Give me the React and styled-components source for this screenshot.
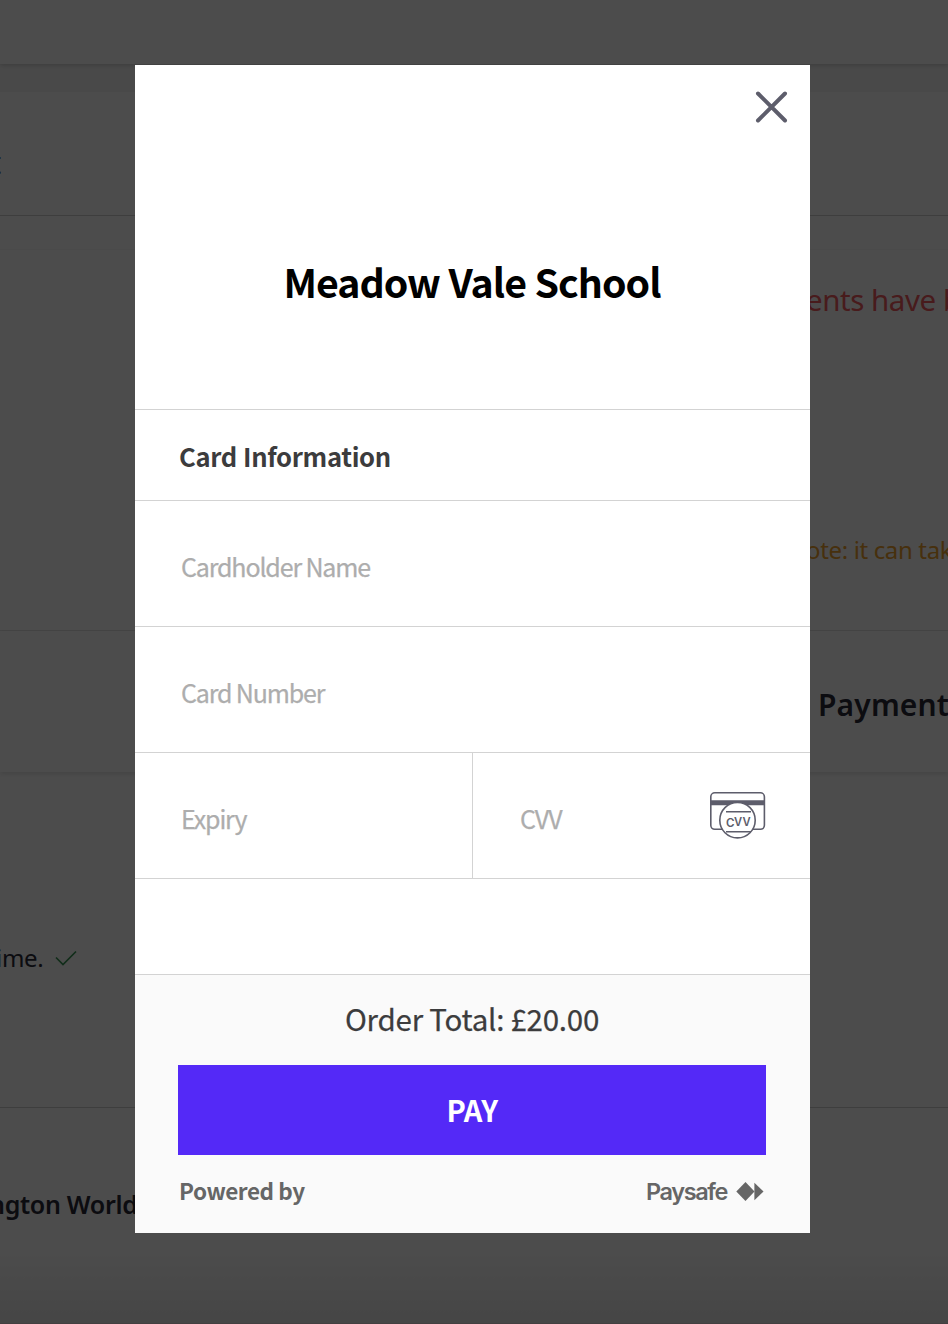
import React from "react";
import styled, { createGlobalStyle } from "styled-components";

const GlobalStyle = createGlobalStyle`
  * { box-sizing: border-box; }
  body { margin: 0; background: #fff; }
`;

const Screen = styled.div`
  position: relative;
  width: 948px;
  height: 1324px;
  overflow: hidden;
  font-family: "Noto Sans", sans-serif;
`;

const Page = styled.div`
  display: flex;
  flex-direction: column;
  height: 100%;
  background: #fff;
`;

const TopBar = styled.div`
  position: relative;
  height: 64px;
  flex: none;
  box-shadow: 0 1px 5px rgba(0, 0, 0, 0.2);
`;

const Gap = styled.div`
  height: 28px;
  flex: none;
  background: #f6f6f6;
`;

const Section = styled.div`
  flex: none;
  display: flex;
  align-items: flex-start;
  height: ${(p) => p.$height}px;
  padding: ${(p) => p.$top || 0}px 0 0 ${(p) => p.$left || 0}px;
  border-bottom: ${(p) => (p.$line ? `1px solid ${p.$line}` : "none")};
  box-shadow: ${(p) => (p.$shadow ? "0 2px 5px rgba(0, 0, 0, 0.12)" : "none")};
`;

const PageText = styled.span`
  display: block;
  white-space: nowrap;
  line-height: 40px;
  font-size: ${(p) => p.$size}px;
  font-weight: ${(p) => p.$weight || 400};
  letter-spacing: ${(p) => p.$spacing || 0}px;
  color: ${(p) => p.$color || "#282b38"};
  margin-left: ${(p) => p.$shift || 0}px;
`;

const Tick = styled.svg`
  display: block;
  margin: 11px 0 0 11px;
`;

const PageEnd = styled.div`
  flex: 1;
  background: linear-gradient(#fff, #e9e9e9);
  border-bottom: 1px solid #e2d2d6;
`;

const Overlay = styled.div`
  position: absolute;
  inset: 0;
  display: flex;
  align-items: flex-start;
  padding: 65px 0 0 135px;
  background: rgba(0, 0, 0, 0.7);
`;

const Dialog = styled.div`
  display: flex;
  flex-direction: column;
  width: 675px;
  height: 1168px;
  background: #fff;
  font-family: "Noto Sans CJK SC", sans-serif;
`;

const DialogHeader = styled.header`
  height: 345px;
  flex: none;
  border-bottom: 1px solid #d3d3d3;
`;

const CloseRow = styled.div`
  display: flex;
  justify-content: flex-end;
  height: 186px;
  padding: 26px 22px 0 0;
`;

const CloseButton = styled.button`
  width: 33px;
  height: 33px;
  padding: 0;
  border: 0;
  background: none;
  svg { display: block; }
`;

const Title = styled.h1`
  margin: 0;
  padding-right: 1px;
  font-size: 39.3px;
  line-height: 60px;
  font-weight: 700;
  letter-spacing: -0.98px;
  word-spacing: 0.6px;
  text-align: center;
  color: #000;
`;

const SectionTitle = styled.h2`
  flex: none;
  margin: 0;
  height: 91px;
  padding: 0 0 0 44px;
  border-bottom: 1px solid #d3d3d3;
  font-size: 25.6px;
  line-height: 91px;
  font-weight: 700;
  letter-spacing: -0.35px;
  word-spacing: 0.8px;
  color: #3c3c3d;
`;

const FieldRow = styled.div`
  display: flex;
  flex: none;
  height: 126px;
  border-bottom: 1px solid #d3d3d3;
`;

const Field = styled.div`
  display: flex;
  justify-content: space-between;
  flex: ${(p) => (p.$width ? "none" : 1)};
  width: ${(p) => (p.$width ? `${p.$width}px` : "auto")};
  padding: 0 44px 0 ${(p) => p.$indent || 46}px;
  border-right: ${(p) => (p.$divided ? "1px solid #d3d3d3" : "none")};
`;

const Placeholder = styled.span`
  font-size: 25px;
  line-height: 131px;
  letter-spacing: -1.15px;
  color: #adadad;
  -webkit-text-stroke: 0.25px #adadad;
`;

const CvvIcon = styled.svg`
  display: block;
  margin-top: 37px;
`;

const Footer = styled.footer`
  margin-top: auto;
  height: 259px;
  padding: 0 44px 0 43px;
  border-top: 1px solid #d3d3d3;
  background: #fafafa;
`;

const Total = styled.div`
  height: 90px;
  line-height: 87px;
  font-size: 29.5px;
  letter-spacing: -0.25px;
  text-align: center;
  color: #3c3c3d;
  -webkit-text-stroke: 0.25px #3c3c3d;
`;

const PayButton = styled.button`
  display: block;
  width: 100%;
  height: 90px;
  padding: 0 0 2px;
  border: 0;
  background: #5429f7;
  color: #fff;
  font: 700 29px/88px "Noto Sans CJK SC", sans-serif;
  letter-spacing: -0.6px;
`;

const Powered = styled.div`
  display: flex;
  justify-content: space-between;
  padding: 15px 2px 0 1px;
  line-height: 40px;
  color: #666;
  font-size: 22.5px;
  font-weight: 700;
  letter-spacing: -0.45px;
`;

const Brand = styled.span`
  display: flex;
  gap: 9px;
  font-family: Inter, sans-serif;
  font-size: 23.5px;
  font-weight: 600;
  line-height: 43px;
  letter-spacing: -1.4px;
  svg { display: block; margin-top: 12px; }
`;

export default function App() {
  return (
    <Screen>
      <GlobalStyle />
      <Page>
        <TopBar />
        <Gap />
        <Section $height={124} $top={51} $line="#cfcfcf">
          <PageText $size={30} $shift={-9.7}>t</PageText>
        </Section>
        <Section $height={34} $line="#f9f9f9" />
        <Section $height={250} $top={30} $left={806}>
          <PageText $size={29.5} $spacing={-0.45} $color="#f05a5f">ents have been</PageText>
        </Section>
        <Section $height={131} $top={30} $left={806} $line="#e6e6e6">
          <PageText $size={24} $spacing={-0.35} $color="#eda02e">ote: it can take</PageText>
        </Section>
        <Section $height={141} $top={54} $left={818} $shadow>
          <PageText $size={30} $weight={600} $spacing={0.15}>Payments</PageText>
        </Section>
        <Section $height={336} $top={166} $line="#cfcfcf">
          <PageText $size={24} $spacing={-0.3} $shift={-4}>ime.</PageText>
          <Tick width="24" height="18" viewBox="0 0 24 18" fill="none">
            <path d="M2 8.5 9 15.5 22 2.5" stroke="#3a9656" strokeWidth="1.7" />
          </Tick>
        </Section>
        <Section $height={140} $top={76}>
          <PageText $size={25} $weight={600} $shift={-11} $spacing={-0.3}>ngton World</PageText>
        </Section>
        <PageEnd />
      </Page>
      <Overlay>
        <Dialog role="dialog">
          <DialogHeader>
            <CloseRow>
              <CloseButton aria-label="Close">
                <svg width="33" height="33" viewBox="0 0 33 33" fill="none">
                  <path d="M3 2.5 30 29.5M30 2.5 3 29.5" stroke="#5d5d6b" strokeWidth="4" strokeLinecap="round" />
                </svg>
              </CloseButton>
            </CloseRow>
            <Title>Meadow Vale School</Title>
          </DialogHeader>
          <SectionTitle>Card Information</SectionTitle>
          <FieldRow>
            <Field><Placeholder>Cardholder Name</Placeholder></Field>
          </FieldRow>
          <FieldRow>
            <Field><Placeholder>Card Number</Placeholder></Field>
          </FieldRow>
          <FieldRow>
            <Field $width={338} $divided><Placeholder>Expiry</Placeholder></Field>
            <Field $indent={47}>
              <Placeholder>CVV</Placeholder>
              <CvvIcon width="56" height="50" viewBox="0 0 56 50" fill="none" stroke="#5d5d6b" strokeWidth="1.6">
                <rect x="0.8" y="2.8" width="53.6" height="36.5" rx="4" />
                <path d="M1 12.7h54" strokeWidth="5" />
                <circle cx="27.5" cy="30.2" r="17.7" fill="#fff" />
                <path d="M16 21.8h25M16 41.8h25" />
                <g fill="#5d5d6b" stroke="none" fontFamily="Inter, sans-serif" fontSize="11.2" fontWeight="600">
                  <text x="16" y="36.8" fontSize="11.6">C</text>
                  <text x="23.9" y="36">V</text>
                  <text x="32.5" y="35.6">V</text>
                </g>
              </CvvIcon>
            </Field>
          </FieldRow>
          <Footer>
            <Total>Order Total: £20.00</Total>
            <PayButton>PAY</PayButton>
            <Powered>
              <span>Powered by</span>
              <Brand>
                Paysafe
                <svg width="28" height="20" viewBox="0 0 28 20" fill="#666">
                  <path d="M9.5 0 18.5 9.5 9.5 19 0.3 9.5Z" />
                  <path d="M18.4 0.8 27.5 9.5 18.4 18.2Z" />
                </svg>
              </Brand>
            </Powered>
          </Footer>
        </Dialog>
      </Overlay>
    </Screen>
  );
}
